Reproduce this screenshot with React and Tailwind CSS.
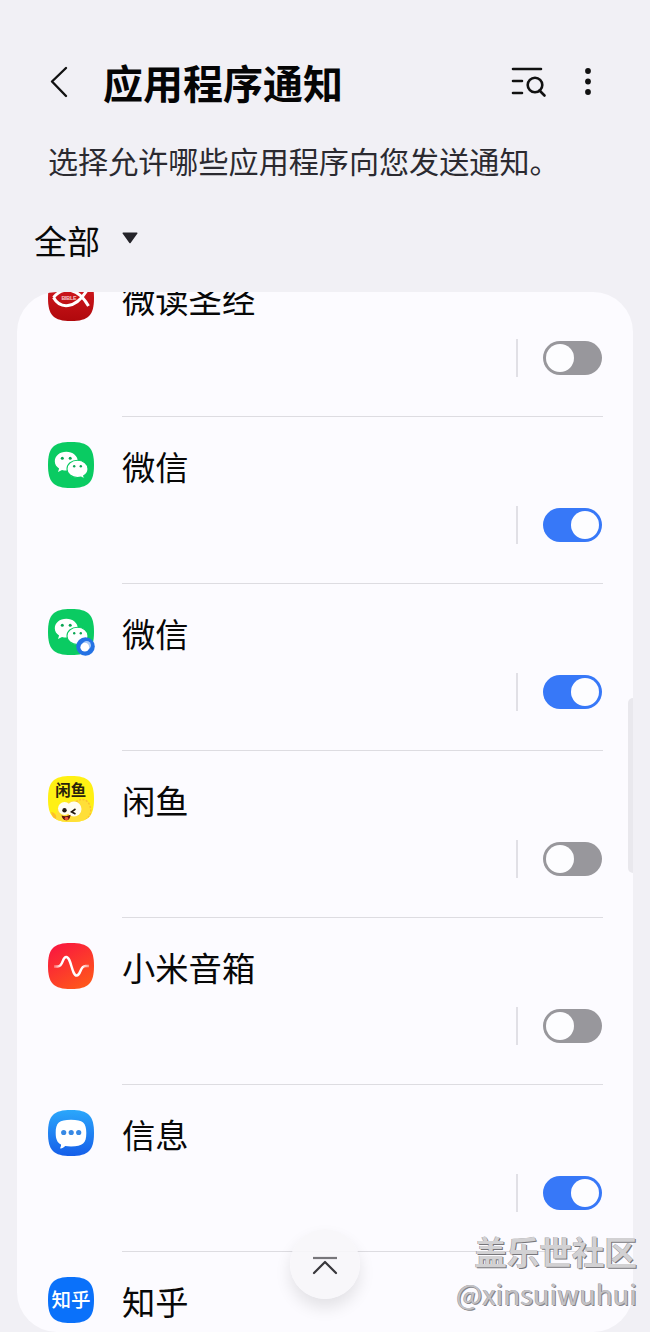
const SQUIRCLE = 'M23 0C40.5 0 46 5.5 46 23S40.5 46 23 46 0 40.5 0 23 5.5 0 23 0Z';

function BibleIcon() {
  return (
    <svg viewBox="0 0 46 46" className="size-[46px]">
      <defs>
        <linearGradient id="bible" x1="0" y1="0" x2="0" y2="1">
          <stop offset="0.4" stopColor="#c9151b" />
          <stop offset="1" stopColor="#b0080c" />
        </linearGradient>
      </defs>
      <path d={SQUIRCLE} fill="url(#bible)" />
      <path d="M5.500 22.500C12 34 27 34.500 38.500 16M5.500 22.500C14 12 29 11 40.500 31" fill="none" stroke="#fff" strokeWidth="3" />
      <text x="13.5" y="24.8" fill="#f6c9c9" fontSize="5.4" fontWeight="700" textLength="15" className="font-['Liberation_Sans',sans-serif]">BIBLE</text>
    </svg>
  );
}

function WechatIcon({ dual }) {
  return (
    <svg viewBox="0 0 46 46" className="size-[46px] overflow-visible">
      <path d={SQUIRCLE} fill="#0acb62" />
      <path d="M18.3 9.8C11.7 9.8 6.8 14 6.8 19.3c0 3 1.700 5.600 4.300 7.300l-1.100 3.500 4-2.100c1.400.4 2.800.6 4.300.6 6.400 0 11.500-4.200 11.500-9.400S24.700 9.800 18.300 9.800Z" fill="#fff" />
      <path d="M29.500 18.300c-5.900 0-10.500 3.800-10.500 8.600s4.600 8.600 10.500 8.600c1.200 0 2.400-.2 3.500-.5l3.600 2-.9-3.300c2.600-1.500 4.300-3.900 4.300-6.800 0-4.800-4.600-8.600-10.500-8.600Z" fill="#fff" stroke="#0acb62" strokeWidth="1.100" />
      <g fill="#0aa653">
        <circle cx="14.3" cy="16.3" r="1.500" />
        <circle cx="22.2" cy="16.3" r="1.500" />
        <circle cx="26.2" cy="24.300" r="1.200" />
        <circle cx="32.800" cy="24.300" r="1.200" />
      </g>
      {dual && (
        <g>
          <circle cx="37.500" cy="37.500" r="9.300" fill="#2472e4" />
          <circle cx="38.700" cy="36.200" r="4.300" fill="#a9cbf9" />
          <circle cx="36.800" cy="38.200" r="4.400" fill="#fff" />
        </g>
      )}
    </svg>
  );
}

function XianyuIcon() {
  return (
    <svg viewBox="0 0 46 46" className="size-[46px]">
      <clipPath id="fish"><path d={SQUIRCLE} /></clipPath>
      <path d={SQUIRCLE} fill="#fff014" />
      <g clipPath="url(#fish)">
        <path d="M8 42C8 31 14 26 24 25c7-1 13-4 17 1 3 5 3 12 0 20H8Z" fill="#ffdf38" />
        <path d="M28 26c6-5 12-2 14 4s0 11-4 13" fill="none" stroke="#fbc02f" strokeWidth="1.500" strokeDasharray="2 1.500" />
        <path d="M3 36c4 0 6 4 5 7l-3-1Z" fill="#ffbe28" />
        <circle cx="16.500" cy="32.500" r="6.500" fill="#fffdf2" />
        <circle cx="26" cy="33" r="7.500" fill="#fffdf2" />
        <circle cx="16.500" cy="34.300" r="2.200" fill="#241a12" />
        <path d="m27.500 33-4 2.800 4 2.200" fill="none" stroke="#241a12" strokeWidth="1.600" />
        <path d="M13.500 39.500c3.500 1.200 6 .7 9-.8 0 3.300-1.800 5.600-4.200 5.600s-4.200-1.700-4.800-4.800Z" fill="#61180d" />
        <circle cx="18.500" cy="42.500" r="1.800" fill="#ee553b" />
      </g>
      <text x="7.3" y="19.500" fill="#28220b" fontSize="15.5" fontWeight="700" className="font-['Noto_Sans_CJK_SC',sans-serif]">闲鱼</text>
    </svg>
  );
}

function SpeakerIcon() {
  return (
    <svg viewBox="0 0 46 46" className="size-[46px]">
      <defs>
        <linearGradient id="speaker" x1="0.2" y1="0" x2="0.8" y2="1">
          <stop stopColor="#f9173f" />
          <stop offset="1" stopColor="#ff591a" />
        </linearGradient>
        <linearGradient id="wave">
          <stop stopColor="#fff" stopOpacity="0.3" />
          <stop offset="0.2" stopColor="#fff" />
          <stop offset="0.8" stopColor="#fff" />
          <stop offset="1" stopColor="#fff" stopOpacity="0.4" />
        </linearGradient>
      </defs>
      <path d={SQUIRCLE} fill="url(#speaker)" />
      <path d="M6 23.500h3.500c6 0 4.500-9.500 8.700-9.500 5 0 5.500 18.500 10.500 18.500 4.300 0 3-9.500 8.800-9.500H41" fill="none" stroke="url(#wave)" strokeWidth="2.500" />
    </svg>
  );
}

function MessagesIcon() {
  return (
    <svg viewBox="0 0 46 46" className="size-[46px]">
      <defs>
        <linearGradient id="messages" x1="0" y1="0" x2="0" y2="1">
          <stop stopColor="#2ba7fb" />
          <stop offset="1" stopColor="#155ee9" />
        </linearGradient>
      </defs>
      <path d={SQUIRCLE} fill="url(#messages)" />
      <path d="M23 9.800c12 0 15.300 3 15.300 13.300S35 36.400 23 36.400c-2.200 0-4.200-.1-5.800-.4-1.500 1.500-3 2.500-4.400 2.500-.7 0-.7-.7-.3-1.300.6-.9.600-1.800.5-2.700-3.800-1.800-5.300-5.200-5.300-11.400C7.700 12.800 11 9.800 23 9.800Z" fill="#fff" />
      <circle cx="15.700" cy="22.500" r="2.600" fill="#3789e4" />
      <circle cx="23.200" cy="22.500" r="2.600" fill="#3789e4" />
      <circle cx="30.700" cy="22.500" r="2.600" fill="#3789e4" />
    </svg>
  );
}

function ZhihuIcon() {
  return (
    <svg viewBox="0 0 46 46" className="size-[46px]">
      <path d={SQUIRCLE} fill="#0a71fa" />
      <text x="3.5" y="30" fill="#fff" fontSize="19.5" fontWeight="500" className="font-['Noto_Sans_CJK_SC',sans-serif]">知乎</text>
    </svg>
  );
}

const apps = [
  { name: '微读圣经', icon: <BibleIcon />, on: false },
  { name: '微信', icon: <WechatIcon />, on: true },
  { name: '微信', icon: <WechatIcon dual />, on: true },
  { name: '闲鱼', icon: <XianyuIcon />, on: false },
  { name: '小米音箱', icon: <SpeakerIcon />, on: false },
  { name: '信息', icon: <MessagesIcon />, on: true },
  { name: '知乎', icon: <ZhihuIcon />, on: false },
];

function Toggle({ on }) {
  return (
    <button
      role="switch"
      aria-checked={on}
      className={`mr-px flex h-[34px] w-[59px] items-center rounded-full px-[3px] ${on ? 'justify-end bg-[#3778f8]' : 'justify-start bg-[#98979c]'}`}
    >
      <span className="size-7 rounded-full bg-[#fdfdff]" />
    </button>
  );
}

function AppRow({ name, icon, on }) {
  return (
    <li className="flex h-[167px] shrink-0 pr-[30px] pl-[31px]">
      <div className="w-[74px] shrink-0 pt-[25px]">{icon}</div>
      <div className="flex flex-1 flex-col border-b border-[#dddce1]">
        <span className="pt-[25px] text-[33.3px] leading-[48px] text-[#080808]">{name}</span>
        <div className="mt-4 flex items-center justify-end">
          <span className="mr-[25px] h-[38px] w-[2px] bg-[#e1e0e6]" />
          <Toggle on={on} />
        </div>
      </div>
    </li>
  );
}

export default function App() {
  return (
    <div className="relative flex h-[1332px] w-[650px] flex-col overflow-hidden bg-[#f1f0f5] font-['Noto_Sans_CJK_SC',sans-serif]">
      <header className="flex h-[118px] shrink-0 items-center pt-[46px] pr-[58px] pl-[47px]">
        <svg viewBox="0 0 24 36" className="h-9 w-6" fill="none" stroke="#111" strokeWidth="2.4" strokeLinecap="round" strokeLinejoin="round">
          <path d="M19 4 5 17.500 19 32" />
        </svg>
        <h1 className="ml-8 flex-1 text-[40px] leading-[52px] font-bold text-[#050505]">应用程序通知</h1>
        <svg viewBox="0 0 38 32" className="h-8 w-[38px]" fill="none" stroke="#111" strokeWidth="2.6" strokeLinecap="round">
          <path d="M4 3h28M4 15h9M4 27h9M30.500 24.500l5 5" />
          <circle cx="26" cy="19" r="7.300" />
        </svg>
        <svg viewBox="0 0 8 30" className="ml-[37px] h-[30px] w-2" fill="#111">
          <circle cx="4" cy="4" r="2.900" />
          <circle cx="4" cy="14.500" r="2.900" />
          <circle cx="4" cy="25" r="2.900" />
        </svg>
      </header>
      <p className="mt-5 h-11 shrink-0 pl-12 text-[30.1px] leading-[44px] whitespace-nowrap text-[#2b2a30]">选择允许哪些应用程序向您发送通知。</p>
      <div className="mt-[34px] flex h-12 shrink-0 items-center pl-[34px]">
        <span className="text-[33px] leading-[48px] text-[#080808]">全部</span>
        <svg viewBox="0 0 16 12" className="mb-[4px] ml-[22px] h-3 w-4" fill="#25242a">
          <path d="M1 .5h14a.6.600 0 0 1 .4 1L8.600 11a.8.800 0 0 1-1.200 0L.6 1.500A.6.600 0 0 1 1 .5Z" />
        </svg>
      </div>
      <main className="relative mx-[17px] mt-[28px] h-[1040px] shrink-0 overflow-hidden rounded-[40px] bg-[#fcfbff]">
        <ul className="-mt-[42px] flex flex-col">
          {apps.map((app, i) => (
            <AppRow key={i} {...app} />
          ))}
        </ul>
        <div className="absolute top-[406px] right-0 h-[175px] w-[5px] rounded-l-full bg-[#e9e8ed]" />
      </main>
      <button className="absolute top-[1229px] left-[290px] flex size-[70px] items-center justify-center rounded-full bg-[#f7f6fa]/90 shadow-[0_9px_16px_rgba(0,0,0,0.1)]">
        <svg viewBox="0 0 26 20" className="mt-1 h-5 w-[26px]" fill="none" strokeWidth="2.2">
          <path d="M1 2h24" stroke="#77767a" />
          <path d="M2 17 13 6l11 11" stroke="#39383c" strokeLinecap="round" strokeLinejoin="round" />
        </svg>
      </button>
      <div className="absolute right-[13px] bottom-[20px] flex flex-col items-end text-right whitespace-nowrap">
        <span className="text-[32.5px] leading-[46px] font-bold text-[#d2d1d3] [text-shadow:1px_1px_0_#77767a,-0.5px_-0.5px_0_#9b9a9e]">盖乐世社区</span>
        <span className="text-[27.5px] leading-[38px] text-[#c3c2c5] [text-shadow:1px_1px_0_#85848a,-0.5px_-0.5px_0_#9b9a9e]">@xinsuiwuhui</span>
      </div>
    </div>
  );
}
